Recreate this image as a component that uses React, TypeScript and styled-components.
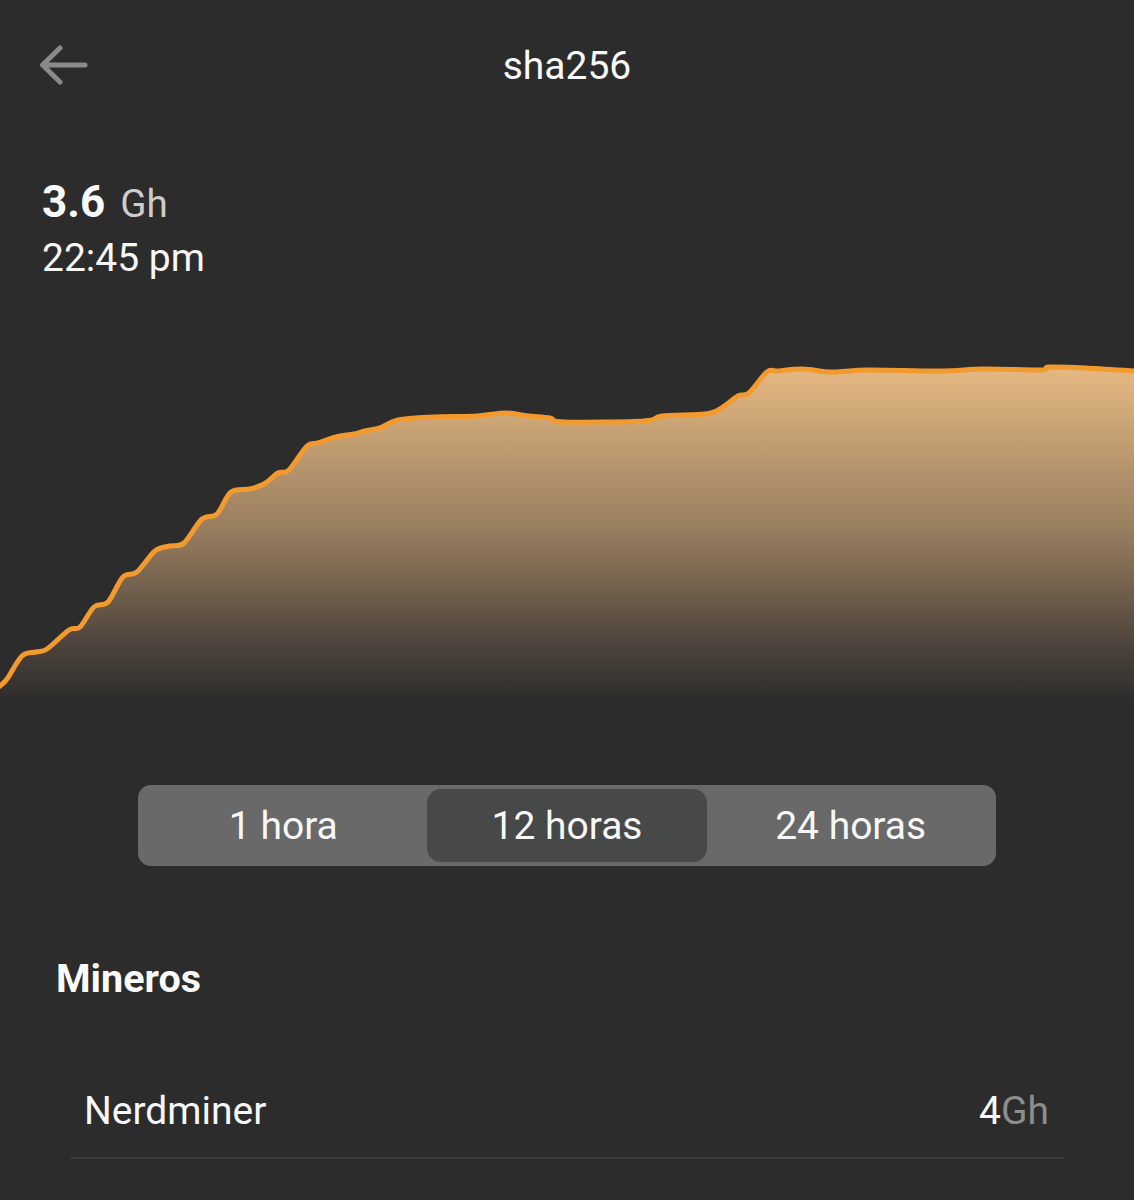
import React from "react";
import styled, { createGlobalStyle } from "styled-components";

const GlobalStyle = createGlobalStyle`
  html, body {
    margin: 0;
    padding: 0;
    background: #2c2c2c;
  }
  body {
    font-family: Roboto, "Noto Sans", Arial, sans-serif;
    color: #f7f7f7;
  }
`;

const points: [number, number][] = [
  [0, 687], [7, 680], [22, 657], [36, 653], [47, 650], [69, 631], [80, 628],
  [94, 608], [108, 603], [123, 578], [137, 573], [155, 552], [170, 547],
  [184, 544], [202, 520], [217, 515], [231, 493], [250, 490], [264, 485],
  [278, 474], [289, 471], [307, 447], [318, 444], [336, 438], [354, 435],
  [365, 432], [380, 429], [398, 421], [434, 418], [477, 417], [506, 414],
  [528, 417], [550, 419], [564, 423], [644, 422], [662, 417], [705, 415],
  [720, 410], [738, 397], [749, 394], [767, 373], [777, 372], [803, 370],
  [832, 373], [868, 371], [940, 372], [984, 370], [1041, 371], [1049, 368],
  [1085, 369], [1134, 372],
];

// catmull-rom -> bezier, keeps the little steps soft
const smoothPath = (pts: [number, number][]) => {
  let d = `M${pts[0][0]} ${pts[0][1]}`;
  for (let i = 0; i < pts.length - 1; i++) {
    const p0 = pts[i - 1] || pts[i];
    const p1 = pts[i];
    const p2 = pts[i + 1];
    const p3 = pts[i + 2] || p2;
    const c1x = p1[0] + (p2[0] - p0[0]) / 6;
    const c1y = p1[1] + (p2[1] - p0[1]) / 6;
    const c2x = p2[0] - (p3[0] - p1[0]) / 6;
    const c2y = p2[1] - (p3[1] - p1[1]) / 6;
    d += ` C${c1x.toFixed(1)} ${c1y.toFixed(1)} ${c2x.toFixed(1)} ${c2y.toFixed(1)} ${p2[0]} ${p2[1]}`;
  }
  return d;
};

const linePath = smoothPath(points);
const areaPath = `${linePath} L1134 700 L0 700 Z`;

const ranges = ["1 hora", "12 horas", "24 horas"];

const App = () => {
  const [range, setRange] = React.useState("12 horas");

  return (
    <>
      <GlobalStyle />
      <Screen>
        <Header>
          <BackButton aria-label="back">
            <svg width="50" height="42" viewBox="0 0 50 42" fill="none">
              <path
                d="M47 20H5M22 3L4.5 20L22 37"
                stroke="#8a8a8a"
                strokeWidth="5"
                strokeLinecap="round"
                strokeLinejoin="round"
              />
            </svg>
          </BackButton>
          <Title>sha256</Title>
          <span />
        </Header>

        <Stats>
          <Rate>
            3.6 <Unit>Gh</Unit>
          </Rate>
          <Time>22:45 pm</Time>
        </Stats>

        <Chart viewBox="0 300 1134 400" preserveAspectRatio="none">
          <defs>
            <linearGradient id="fill" x1="0" y1="370" x2="0" y2="700" gradientUnits="userSpaceOnUse">
              <stop offset="0" stopColor="#e5b882" />
              <stop offset="0.5" stopColor="#967c5e" />
              <stop offset="0.85" stopColor="#4a413a" />
              <stop offset="1" stopColor="#2e2d2c" />
            </linearGradient>
          </defs>
          <path d={areaPath} fill="url(#fill)" />
          <path
            d={linePath}
            fill="none"
            stroke="#f29a2e"
            strokeWidth="5"
            strokeLinejoin="round"
            strokeLinecap="round"
          />
        </Chart>

        <Segment>
          {ranges.map((r) => (
            <SegmentItem key={r} $active={r === range} onClick={() => setRange(r)}>
              {r}
            </SegmentItem>
          ))}
        </Segment>

        <SectionTitle>Mineros</SectionTitle>

        <MinerRow>
          <MinerName>Nerdminer</MinerName>
          <MinerRate>
            4<MinerUnit>Gh</MinerUnit>
          </MinerRate>
        </MinerRow>
      </Screen>
    </>
  );
};

export default App;

const Screen = styled.div`
  width: 1134px;
  min-height: 1200px;
  background: #2c2c2c;
  display: flex;
  flex-direction: column;
`;

const Header = styled.div`
  display: grid;
  grid-template-columns: 1fr auto 1fr;
  align-items: center;
  height: 48px;
  padding: 42px 38px 0;
`;

const BackButton = styled.button`
  background: none;
  border: none;
  padding: 0;
  width: 50px;
  height: 42px;
  display: flex;
  cursor: pointer;
`;

const Title = styled.h1`
  margin: 0;
  font-size: 39px;
  font-weight: 400;
  line-height: 48px;
  color: #fafafa;
`;

const Stats = styled.div`
  padding: 85px 42px 0;
  height: 124px;
`;

const Rate = styled.div`
  font-size: 44px;
  font-weight: 700;
  line-height: 55px;
  color: #fafafa;
`;

const Unit = styled.span`
  font-size: 38.5px;
  font-weight: 400;
  color: #cdcdcd;
  margin-left: 4px;
`;

const Time = styled.div`
  font-size: 39px;
  line-height: 55px;
  color: #f7f7f7;
`;

const Chart = styled.svg`
  display: block;
  width: 1134px;
  height: 400px;
`;

const Segment = styled.div`
  margin: 86px auto 0;
  width: 858px;
  height: 81px;
  box-sizing: border-box;
  padding: 4px 5px;
  background: #696969;
  border-radius: 13px;
  display: grid;
  grid-template-columns: repeat(3, 1fr);
  gap: 3px;
`;

const SegmentItem = styled.button<{ $active: boolean }>`
  border: none;
  border-radius: 14px;
  background: ${(p) => (p.$active ? "#474848" : "transparent")};
  color: #f7f7f7;
  font-family: inherit;
  font-size: 39px;
  line-height: 72px;
  padding: 0;
  cursor: pointer;
`;

const SectionTitle = styled.h2`
  margin: 89px 0 0 56px;
  font-size: 39.5px;
  font-weight: 700;
  line-height: 48px;
  color: #fafafa;
`;

const MinerRow = styled.div`
  margin: 84px 70px 0;
  padding: 0 15px 22px 14px;
  display: flex;
  justify-content: space-between;
  align-items: center;
  border-bottom: 2px solid #3b3b3b;
`;

const MinerName = styled.span`
  font-size: 39px;
  line-height: 48px;
  color: #f7f7f7;
`;

const MinerRate = styled.span`
  font-size: 39px;
  line-height: 48px;
  color: #f7f7f7;
`;

const MinerUnit = styled.span`
  color: #8d8d8d;
`;
